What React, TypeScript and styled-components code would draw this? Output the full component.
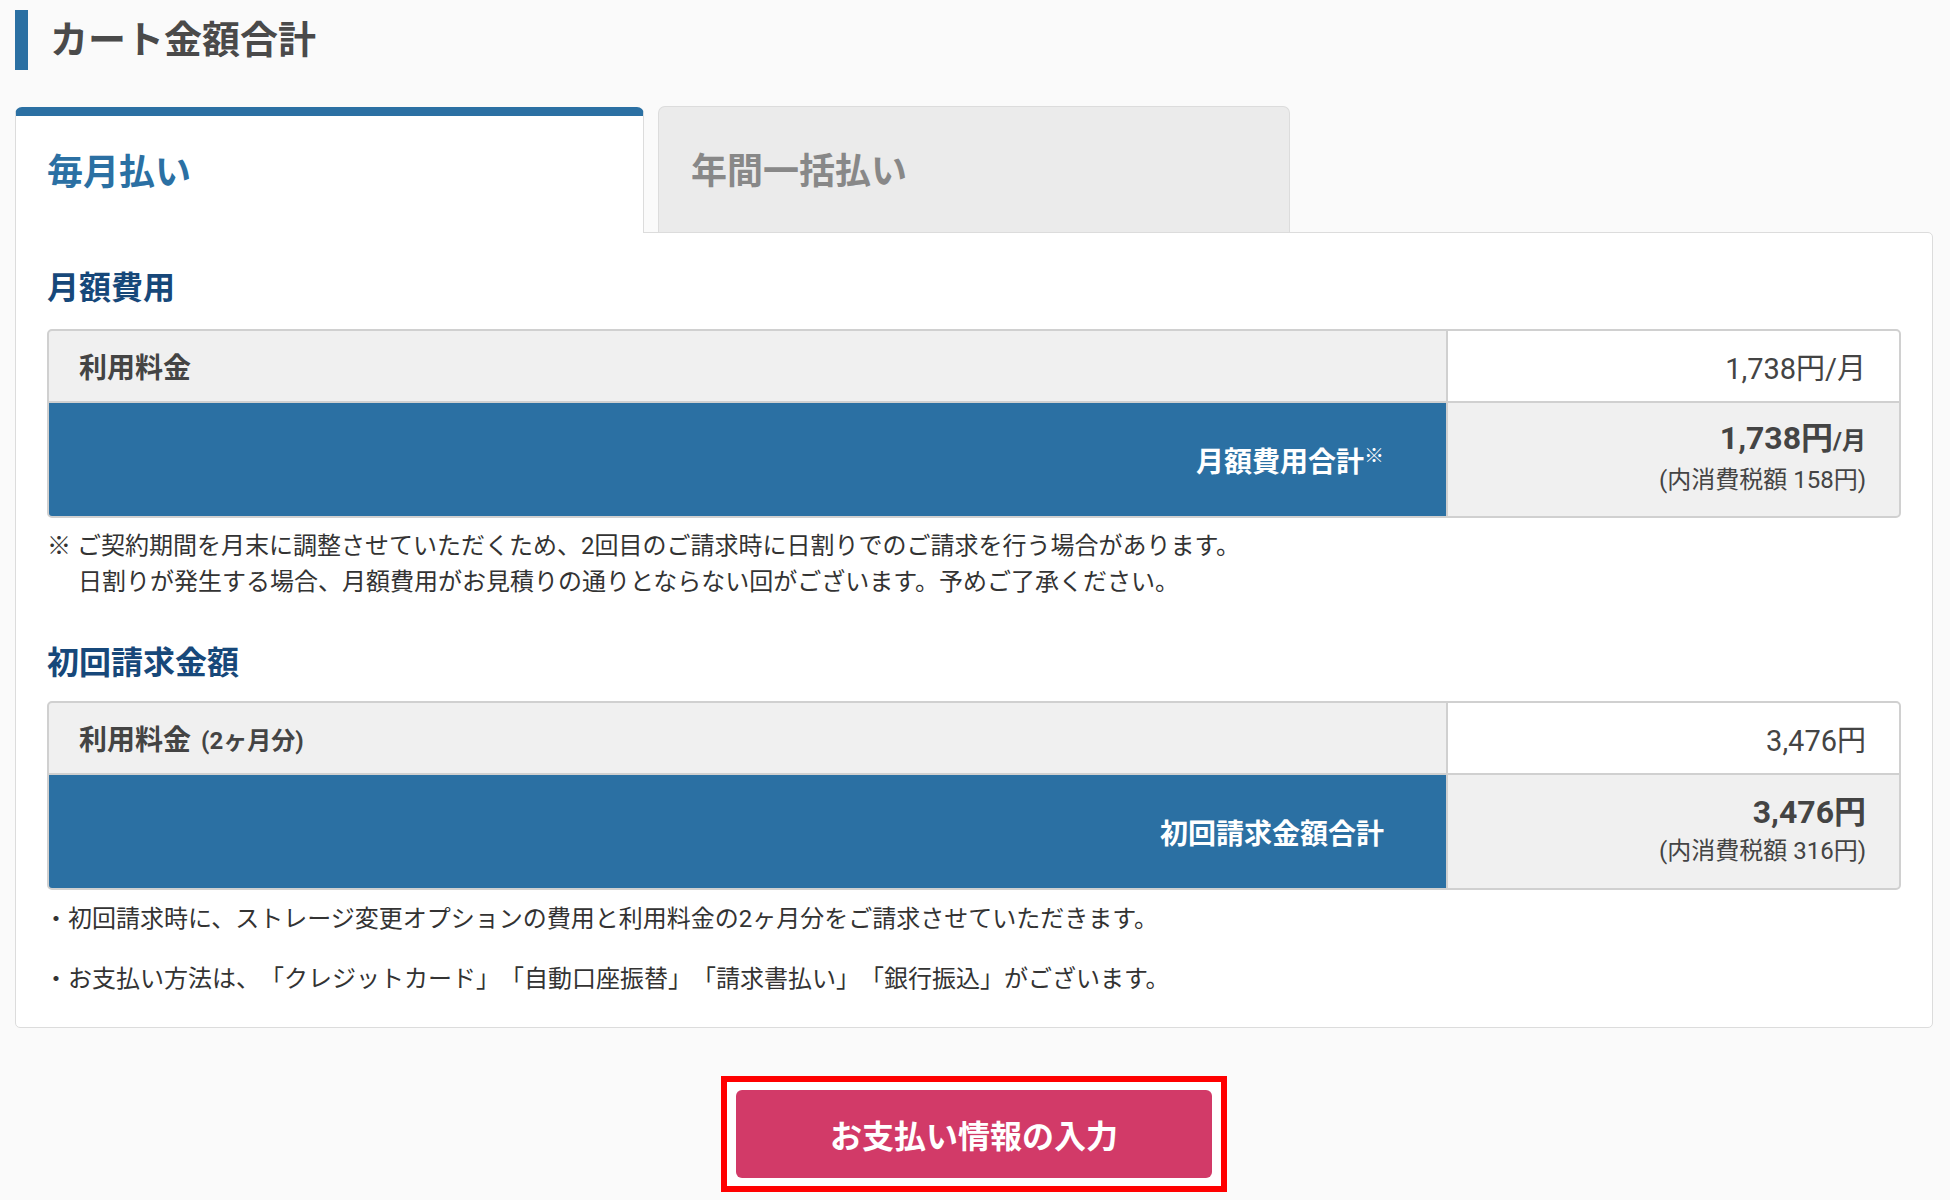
import React from 'react';
import styled, { createGlobalStyle } from 'styled-components';

const BLUE = '#2b70a3';
const NAVY = '#17487a';
const LINE = '#d0d0d0';

const GlobalStyle = createGlobalStyle`
  body {
    margin: 0;
    background: #fafafa;
    font-family: Roboto, "Noto Sans CJK JP", sans-serif;
    color: #333;
    text-spacing-trim: space-all;
  }
`;

const Page = styled.div`
  padding: 10px 17px 0 15px;
`;

const PageTitle = styled.h1`
  margin: 0;
  height: 60px;
  border-left: 13px solid ${BLUE};
  padding-left: 22px;
  font-size: 38px;
  line-height: 60px;
  font-weight: 700;
  color: #4a4a4a;
`;

const Tabs = styled.div`
  display: flex;
  align-items: flex-end;
  gap: 14px;
  margin-top: 36px;
`;

interface TabProps {
  active?: boolean;
}

const Tab = styled.div<TabProps>`
  position: relative;
  z-index: 1;
  box-sizing: border-box;
  display: flex;
  align-items: center;
  height: 126px;
  border: 1px solid #dcdcdc;
  border-bottom: none;
  border-radius: 7px 7px 0 0;
  font-size: 36px;
  font-weight: 700;
  ${({ active }) =>
    active
      ? `
    width: 629px;
    margin-bottom: -1px;
    background: #fff;
    border-top: 9px solid ${BLUE};
    padding: 0 0 11px 31px;
    color: ${BLUE};
  `
      : `
    width: 632px;
    background: #ebebeb;
    padding: 0 0 4px 32px;
    color: #888;
  `}
`;

const Panel = styled.div`
  background: #fff;
  border: 1px solid #dcdcdc;
  border-radius: 0 5px 5px 5px;
  padding: 0 31px 30px;
`;

interface HeadingProps {
  first?: boolean;
}

const SectionHeading = styled.h2<HeadingProps>`
  margin: ${({ first }) => (first ? '35px 0 21px' : '43px 0 18px')};
  font-size: 32px;
  line-height: 40px;
  font-weight: 700;
  color: ${NAVY};
`;

const Table = styled.div`
  display: grid;
  grid-template-columns: 1fr 451px;
  border: 2px solid ${LINE};
  border-radius: 5px;
  overflow: hidden;
  background: ${LINE};
  gap: 2px;
`;

const LabelCell = styled.div`
  display: flex;
  align-items: center;
  height: 70px;
  padding-left: 30px;
  background: #f0f0f0;
  font-size: 28px;
  font-weight: 700;
  color: #444;
`;

const Small = styled.span`
  font-size: 24px;
  margin-left: 10px;
`;

const ValueCell = styled.div`
  display: flex;
  align-items: center;
  justify-content: flex-end;
  padding-right: 33px;
  background: #fff;
  font-size: 29px;
  color: #444;
`;

const TotalLabel = styled.div`
  display: flex;
  align-items: center;
  justify-content: flex-end;
  height: 113px;
  padding-right: 62px;
  background: ${BLUE};
  font-size: 28px;
  font-weight: 700;
  color: #fff;
`;

const Mark = styled.sup`
  font-size: 20px;
  font-weight: 400;
  line-height: 0;
  position: relative;
  top: -4px;
`;

const TotalValue = styled.div`
  display: flex;
  flex-direction: column;
  align-items: flex-end;
  justify-content: center;
  padding: 0 33px 4px 0;
  background: #f0f0f0;
  color: #444;
`;

const Amount = styled.div`
  font-size: 32px;
  line-height: 42px;
  font-weight: 700;
  color: #444;
`;

const Unit = styled.span`
  font-size: 24px;
`;

const Tax = styled.div`
  font-size: 24px;
  line-height: 36px;
`;

const Note = styled.p`
  margin: 10px 0 0;
  padding-left: 31px;
  text-indent: -31px;
  font-size: 24px;
  line-height: 36px;
  color: #333;
`;

const Bullets = styled.ul`
  list-style: none;
  margin: 11px 0 0;
  padding: 0;
  display: flex;
  flex-direction: column;
  gap: 24px;
`;

const Bullet = styled.li`
  font-size: 24px;
  line-height: 36px;
  color: #333;
  margin-left: -3px;
`;

const Actions = styled.div`
  display: flex;
  justify-content: center;
  margin-top: 48px;
`;

const Highlight = styled.div`
  border: 6px solid #ff0000;
  padding: 8px 9px;
  background: #fff;
`;

const PayButton = styled.button`
  width: 476px;
  height: 88px;
  border: none;
  border-radius: 6px;
  background: #d23a68;
  color: #fff;
  font-family: inherit;
  font-size: 32px;
  font-weight: 700;
  cursor: pointer;
`;

interface TotalProps {
  label: React.ReactNode;
  amount: string;
  unit?: string;
  tax: string;
}

const TotalRow: React.FC<TotalProps> = ({ label, amount, unit, tax }) => (
  <>
    <TotalLabel>{label}</TotalLabel>
    <TotalValue>
      <Amount>
        {amount}
        {unit && <Unit>{unit}</Unit>}
      </Amount>
      <Tax>(内消費税額 {tax})</Tax>
    </TotalValue>
  </>
);

export default function App() {
  return (
    <Page>
      <GlobalStyle />
      <PageTitle>カート金額合計</PageTitle>

      <Tabs>
        <Tab active>毎月払い</Tab>
        <Tab>年間一括払い</Tab>
      </Tabs>

      <Panel>
        <SectionHeading first>月額費用</SectionHeading>
        <Table>
          <LabelCell>利用料金</LabelCell>
          <ValueCell>1,738円/月</ValueCell>
          <TotalRow
            label={
              <>
                月額費用合計<Mark>※</Mark>
              </>
            }
            amount="1,738円"
            unit="/月"
            tax="158円"
          />
        </Table>
        <Note>
          ※ ご契約期間を月末に調整させていただくため、2回目のご請求時に日割りでのご請求を行う場合があります。
          <br />
          日割りが発生する場合、月額費用がお見積りの通りとならない回がございます。予めご了承ください。
        </Note>

        <SectionHeading>初回請求金額</SectionHeading>
        <Table>
          <LabelCell>
            利用料金<Small>(2ヶ月分)</Small>
          </LabelCell>
          <ValueCell>3,476円</ValueCell>
          <TotalRow label="初回請求金額合計" amount="3,476円" tax="316円" />
        </Table>
        <Bullets>
          <Bullet>・初回請求時に、ストレージ変更オプションの費用と利用料金の2ヶ月分をご請求させていただきます。</Bullet>
          <Bullet>・お支払い方法は、「クレジットカード」「自動口座振替」「請求書払い」「銀行振込」がございます。</Bullet>
        </Bullets>
      </Panel>

      <Actions>
        <Highlight>
          <PayButton>お支払い情報の入力</PayButton>
        </Highlight>
      </Actions>
    </Page>
  );
}
